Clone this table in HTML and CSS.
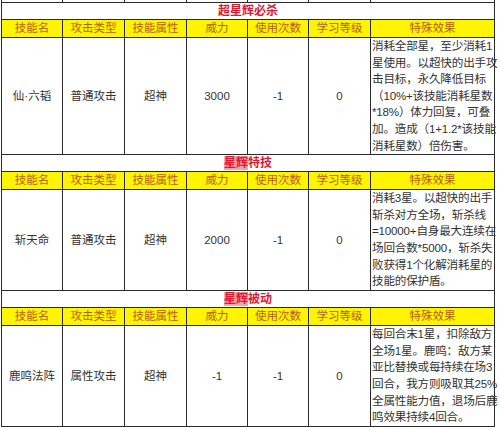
FILE: index.html
```html
<!DOCTYPE html>
<html lang="zh-CN">
<head>
<meta charset="utf-8">
<title>技能表</title>
<link rel="stylesheet" href="styles.css">
</head>
<body>
<table class="skills">
  <colgroup>
    <col class="c1"><col class="c2"><col class="c3"><col class="c4"><col class="c5"><col class="c6"><col class="c7">
  </colgroup>
  <tbody>
    <tr class="cut"><td></td><td></td><td></td><td></td><td></td><td></td><td></td></tr>

    <tr class="title"><td colspan="7"><span>超星辉必杀</span></td></tr>
    <tr class="head"><td>技能名</td><td>攻击类型</td><td>技能属性</td><td>威力</td><td>使用次数</td><td>学习等级</td><td>特殊效果</td></tr>
    <tr class="body b1"><td>仙·六韬</td><td>普通攻击</td><td>超神</td><td>3000</td><td>-1</td><td>0</td>
      <td class="effect">消耗全部星，至少消耗1<br>星使用。以超快的出手攻<br>击目标，永久降低目标<br>（10%+该技能消耗星数<br>*18%）体力回复，可叠<br>加。造成（1+1.2*该技能<br>消耗星数）倍伤害。</td></tr>

    <tr class="title"><td colspan="7"><span class="hl">星辉</span><span>特技</span></td></tr>
    <tr class="head"><td>技能名</td><td>攻击类型</td><td>技能属性</td><td>威力</td><td>使用次数</td><td>学习等级</td><td>特殊效果</td></tr>
    <tr class="body b2"><td>斩天命</td><td>普通攻击</td><td>超神</td><td>2000</td><td>-1</td><td>0</td>
      <td class="effect">消耗3星。以超快的出手<br>斩杀对方全场，斩杀线<br>=10000+自身最大连续在<br>场回合数*5000，斩杀失<br>败获得1个化解消耗星的<br>技能的保护盾。</td></tr>

    <tr class="title"><td colspan="7"><span class="hl">星辉</span><span>被动</span></td></tr>
    <tr class="head"><td>技能名</td><td>攻击类型</td><td>技能属性</td><td>威力</td><td>使用次数</td><td>学习等级</td><td>特殊效果</td></tr>
    <tr class="body b3"><td>鹿鸣法阵</td><td>属性攻击</td><td>超神</td><td>-1</td><td>-1</td><td>0</td>
      <td class="effect">每回合末1星，扣除敌方<br>全场1星。鹿鸣：敌方某<br>亚比替换或每持续在场3<br>回合，我方则吸取其25%<br>全属性能力值，退场后鹿<br>鸣效果持续4回合。</td></tr>
  </tbody>
</table>
</body>
</html>
```

FILE: styles.css
```css
html, body {
  margin: 0;
  padding: 0;
  background: #ffffff;
}

body {
  font-family: "Liberation Sans", "Noto Sans CJK SC", sans-serif;
  font-size: 11.5px;
  color: #333333;
}

.skills {
  border-collapse: collapse;
  table-layout: fixed;
  width: 493px;
  margin-left: 1px;
}

.c1 { width: 61px; }
.c2 { width: 62px; }
.c3 { width: 62px; }
.c4 { width: 61px; }
.c5 { width: 61px; }
.c6 { width: 62px; }
.c7 { width: 124px; }

.skills td {
  border: 1px solid #2a2a2a;
  padding: 0;
  text-align: center;
  vertical-align: middle;
  white-space: nowrap;
}

.cut td {
  height: 2px;
  border-top: 0;
}

.title td {
  height: 16px;
  line-height: 16px;
  color: #e3162f;
  font-size: 12px;
  font-weight: bold;
}

.title .hl {
  background: #f3a3ab;
}

.head td {
  height: 17px;
  line-height: 17px;
  background: #fff500;
  color: #b4601a;
}

.body td {
  line-height: 16.6px;
}

.b1 td { height: 116px; }
.b2 td { height: 100px; }
.b3 td { height: 98px; }

.skills td.effect {
  text-align: left;
  vertical-align: top;
  padding-left: 1px;
  font-size: 11.6px;
  letter-spacing: -0.2px;
}
```
